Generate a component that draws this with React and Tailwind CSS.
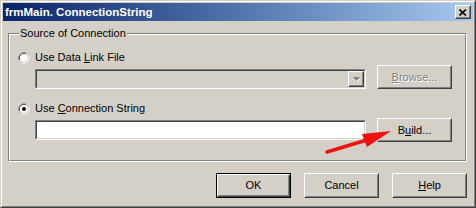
import React from "react";

const raised =
  "border border-t-white border-l-white border-r-[#404040] border-b-[#404040]";
const raisedInner =
  "border border-t-[#d4d0c8] border-l-[#d4d0c8] border-r-[#808080] border-b-[#808080]";
const sunken =
  "border border-t-[#808080] border-l-[#808080] border-r-white border-b-white";
const sunkenInner =
  "border border-t-[#404040] border-l-[#404040] border-r-[#d4d0c8] border-b-[#d4d0c8]";

function Radio({ checked }) {
  return (
    <svg width="12" height="12" viewBox="0 0 12 12" className="shrink-0">
      <path d="M1 8 A5.5 5.5 0 0 1 8 1" fill="none" stroke="#808080" strokeWidth="1" />
      <path d="M2 8 A4.5 4.5 0 0 1 8 2" fill="none" stroke="#404040" strokeWidth="1" />
      <circle cx="6" cy="6" r="4" fill="white" />
      <path d="M4 11 A5.5 5.5 0 0 0 11 4" fill="none" stroke="white" strokeWidth="1" />
      <path d="M4 10 A4.5 4.5 0 0 0 10 4" fill="none" stroke="#d4d0c8" strokeWidth="1" />
      {checked && <circle cx="6" cy="6" r="2" fill="black" />}
    </svg>
  );
}

function Button({ children, disabled, isDefault, className = "" }) {
  const face = (
    <div className={`${raised} w-full h-full`}>
      <div
        className={`${raisedInner} w-full h-full flex items-center justify-center bg-[#d4d0c8] ${
          disabled ? "text-[#808080] [text-shadow:1px_1px_0_white]" : "text-black"
        }`}
      >
        {children}
      </div>
    </div>
  );
  if (isDefault) {
    return <div className={`border border-black ${className}`}>{face}</div>;
  }
  return <div className={className}>{face}</div>;
}

export default function App() {
  return (
    <div className="relative w-[476px] h-[208px] font-['Liberation_Sans',Arial,sans-serif] text-[11px] leading-[13px] text-black select-none">
      <div className="w-full h-full border border-t-[#d4d0c8] border-l-[#d4d0c8] border-r-[#404040] border-b-[#404040]">
        <div className="w-full h-full border border-t-white border-l-white border-r-[#808080] border-b-[#808080] bg-[#d4d0c8] p-px">
          {/* Title bar */}
          <div className="h-[18px] flex items-center justify-between bg-gradient-to-r from-[#0a246a] to-[#a6caf0] pl-[2px] pr-[2px]">
            <span className="font-bold text-white text-[11.5px]">frmMain. ConnectionString</span>
            <div className={`${raised} w-[16px] h-[14px]`}>
              <div className={`${raisedInner} w-full h-full bg-[#d4d0c8] flex items-center justify-center`}>
                <svg width="8" height="7" viewBox="0 0 8 7">
                  <path d="M0.5 0.5 L7 6.5 M7 0.5 L0.5 6.5" stroke="black" strokeWidth="1.6" />
                </svg>
              </div>
            </div>
          </div>

          {/* Group box */}
          <div className="relative mt-[12px] ml-[5px] w-[459px] h-[129px] border border-t-[#808080] border-l-[#808080] border-r-white border-b-white">
            <span className="absolute left-[10px] top-[-7px] px-px bg-[#d4d0c8]">Source of Connection</span>
            <div className="w-full h-full border border-t-white border-l-white border-r-[#808080] border-b-[#808080] pt-[16px]">
              <div className="flex items-center gap-[5px] pl-[8px] h-[13px]">
                <Radio />
                <span>
                  Use Data <span className="underline">L</span>ink File
                </span>
              </div>

              <div className="flex items-start pl-[25px] mt-px">
                <div className={`${sunken} mt-[4px] w-[331px] h-[20px]`}>
                  <div className={`${sunkenInner} w-full h-full bg-[#d4d0c8] flex justify-end`}>
                    <div className={`${raised} w-[16px] h-[16px]`}>
                      <div className={`${raisedInner} w-full h-full bg-[#d4d0c8] flex items-center justify-center`}>
                        <svg width="7" height="5" viewBox="0 0 7 5">
                          <path d="M1 1 H6 L3.5 4 Z" fill="white" transform="translate(1 1)" />
                          <path d="M0 0 H7 L3.5 4 Z" fill="#808080" />
                        </svg>
                      </div>
                    </div>
                  </div>
                </div>
                <Button disabled className="ml-[11px] w-[75px] h-[24px]">
                  <span>
                    <span className="underline">B</span>rowse...
                  </span>
                </Button>
              </div>

              <div className="flex items-center gap-[5px] pl-[8px] h-[13px] mt-[13px]">
                <Radio checked />
                <span>
                  Use <span className="underline">C</span>onnection String
                </span>
              </div>

              <div className="flex items-start pl-[25px] mt-[3px]">
                <div className={`${sunken} mt-[2px] w-[331px] h-[20px]`}>
                  <div className={`${sunkenInner} w-full h-full bg-white`} />
                </div>
                <Button className="ml-[11px] w-[75px] h-[24px]">
                  <span>
                    B<span className="underline">u</span>ild...
                  </span>
                </Button>
              </div>
            </div>
          </div>

          {/* Bottom buttons */}
          <div className="flex gap-[13px] ml-[213px] mt-[11px]">
            <Button isDefault className="w-[75px] h-[25px]">OK</Button>
            <Button className="w-[75px] h-[25px]">Cancel</Button>
            <Button className="w-[75px] h-[25px]">
              <span>
                <span className="underline">H</span>elp
              </span>
            </Button>
          </div>
        </div>
      </div>

      {/* Red annotation arrow */}
      <svg className="absolute inset-0 pointer-events-none" width="476" height="208" viewBox="0 0 476 208">
        <line x1="327" y1="152" x2="370" y2="139" stroke="#ee1111" strokeWidth="3.5" strokeLinecap="round" />
        <path d="M391 131 L362 134 L367 147 Z" fill="#ee1111" />
      </svg>
    </div>
  );
}
